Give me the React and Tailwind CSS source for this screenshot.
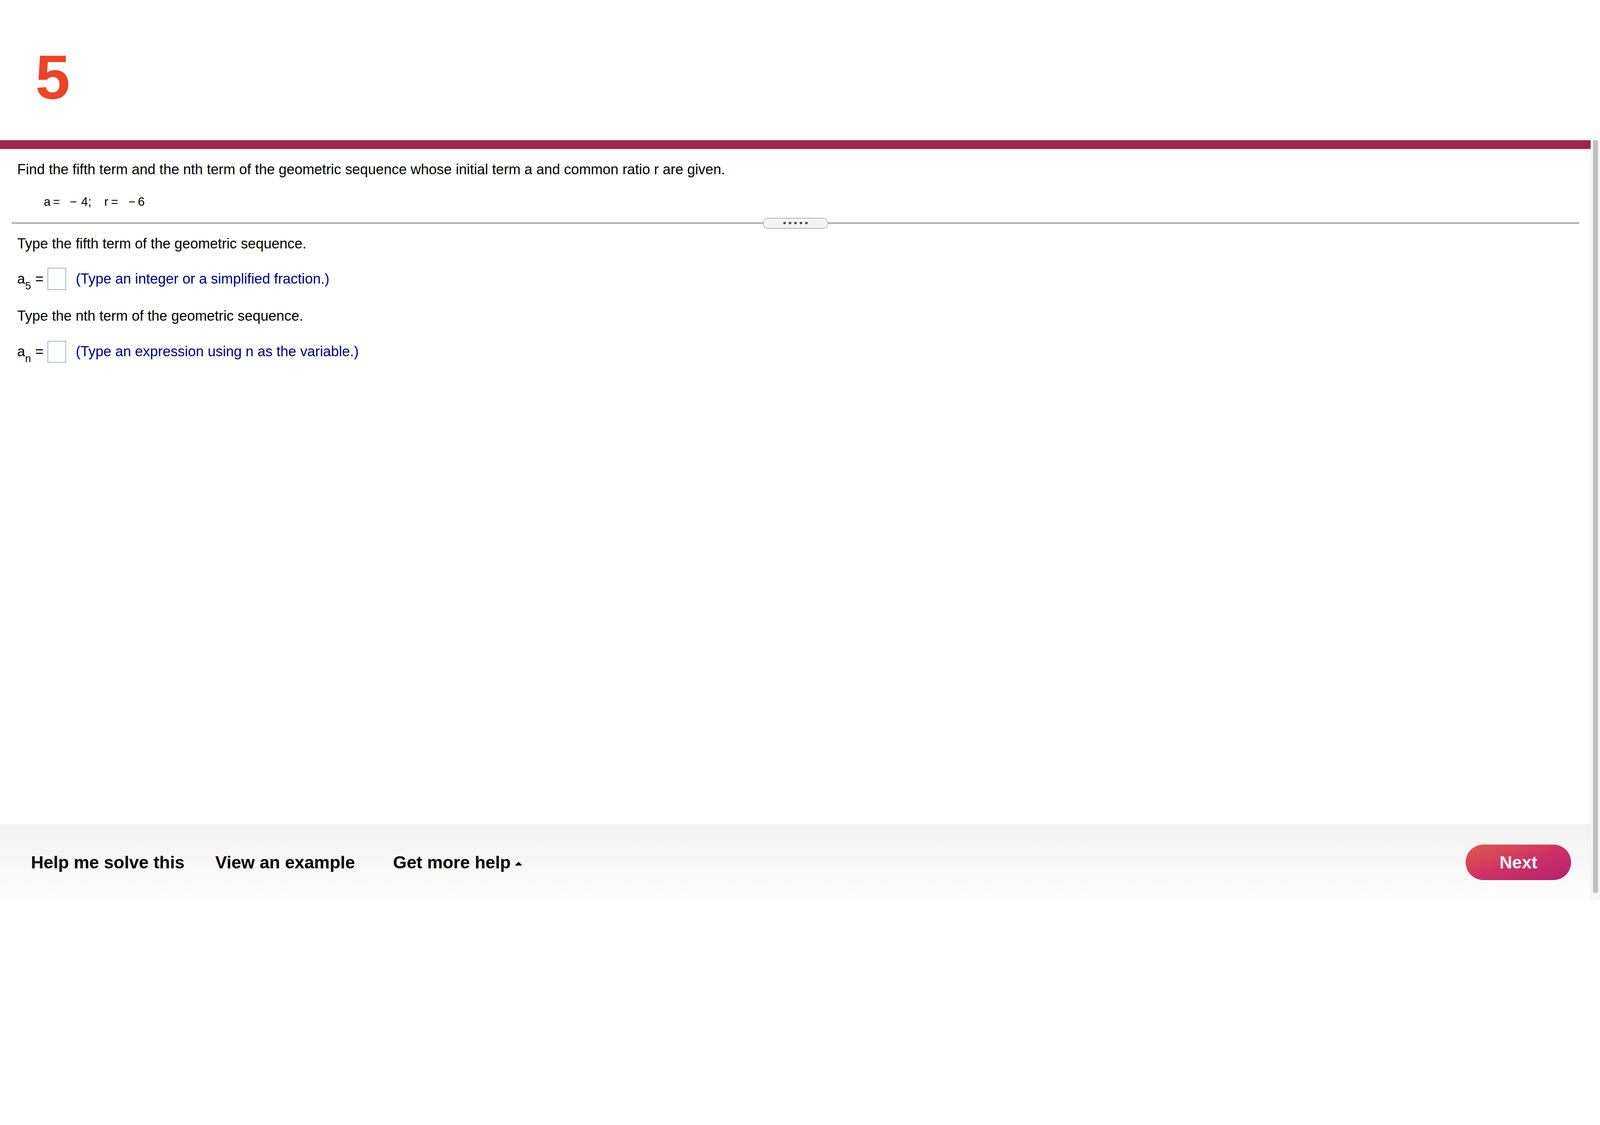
import React from "react";

const hintClass = "text-[36.4px] leading-[41.6px] text-[#000080]";

function AnswerRow({ sub, hint }) {
  return (
    <div className="ml-[14.4px] flex h-[55.2px] items-center text-[36.4px] leading-[41.6px] text-black">
      <span>
        a<sub className="text-[27px] bottom-[-14.4px]">{sub}</sub>
      </span>
      <span className="ml-[11px]">=</span>
      <span className="ml-[10.4px] h-full w-[47.2px] border-[1.6px] border-[#3a7a9c] bg-white" />
      <span className={"ml-[24.8px] " + hintClass}>{hint}</span>
    </div>
  );
}

function Divider() {
  return (
    <div className="mt-[23.2px] flex h-[27.2px] items-center">
      <div className="h-[1.6px] flex-1 bg-[#66707c]" />
      <div className="flex h-[27.2px] w-[166.4px] items-center justify-center gap-[7.6px] rounded-full border-[1.6px] border-[#66707c] bg-[#f3f4f6]">
        {[0, 1, 2, 3, 4].map((i) => (
          <span key={i} className="h-[6.4px] w-[6.4px] rounded-full bg-[#4b4b4b]" />
        ))}
      </div>
      <div className="h-[1.6px] flex-1 bg-[#66707c]" />
    </div>
  );
}

function Footer() {
  return (
    <div className="flex h-[193.6px] shrink-0 items-center bg-linear-to-b from-[#f2f2f2] to-[#fdfdfd] pl-[79.2px] pr-[49.6px] text-[44.8px] font-bold text-black">
      <span>Help me solve this</span>
      <span className="ml-[78.4px]">View an example</span>
      <span className="ml-[97.6px] flex items-center">
        Get more help
        <svg className="ml-[11px] mt-[8px]" width="19" height="10" viewBox="0 0 24 12">
          <polygon points="12,0 24,12 0,12" fill="#000" />
        </svg>
      </span>
      <button className="ml-auto flex h-[91.2px] w-[270.4px] items-center justify-center rounded-full bg-linear-to-br from-[#df5a3f] via-[#cf3166] to-[#b1216f] text-[44.8px] font-bold text-[#f6f7fb] shadow-[0_0_0_2.4px_rgba(255,255,255,0.7)]">
        Next
      </button>
    </div>
  );
}

export default function App() {
  return (
    <div className="flex h-[2304px] w-full flex-col overflow-hidden bg-white font-['Liberation_Sans',Arial,sans-serif]">
      <header className="h-[359.2px] shrink-0 pl-[90.4px] pt-[116.8px]">
        <span className="text-[160px] font-bold leading-[160px] text-[#ec4427]">5</span>
      </header>

      <div className="flex min-h-0 flex-1">
        <div className="flex min-w-0 flex-1 flex-col">
          <div className="h-[21.6px] shrink-0 bg-[#a3244a]" />
          <div className="h-[2.4px] shrink-0 bg-[#cfd6e0]" />

          <main className="flex-1 pl-[29.6px] pr-[28.8px] text-black">
            <p className="ml-[14.4px] mt-[29.6px] text-[36.4px] leading-[41.6px]">
              Find the fifth term and the nth term of the geometric sequence whose initial term a and common ratio r are given.
            </p>
            <p className="ml-[82.4px] mt-[44.8px] flex text-[31.2px] leading-[35.2px]">
              <span>a</span>
              <span className="ml-[6px]">=</span>
              <span className="ml-[25px]">−</span>
              <span className="ml-[11px]">4;</span>
              <span className="ml-[33px]">r</span>
              <span className="ml-[7px]">=</span>
              <span className="ml-[26px]">−</span>
              <span className="ml-[6.4px]">6</span>
            </p>

            <Divider />

            <p className="ml-[14.4px] mt-[18.4px] text-[36.4px] leading-[41.6px]">
              Type the fifth term of the geometric sequence.
            </p>
            <div className="mt-[41.6px]">
              <AnswerRow sub="5" hint="(Type an integer or a simplified fraction.)" />
            </div>

            <p className="ml-[14.4px] mt-[46.4px] text-[36.4px] leading-[41.6px]">
              Type the nth term of the geometric sequence.
            </p>
            <div className="mt-[43.2px]">
              <AnswerRow sub="n" hint="(Type an expression using n as the variable.)" />
            </div>
          </main>

          <Footer />
        </div>

        <div className="flex w-[24px] shrink-0 border-x-[1.6px] border-l-[#e6e6e6] border-r-[#ececec] bg-[#f8f8f8]">
          <div className="mb-[18.4px] ml-[4.8px] w-[12.8px] rounded-b-[6.4px] bg-[#c1c1c1]" />
        </div>
      </div>
    </div>
  );
}
